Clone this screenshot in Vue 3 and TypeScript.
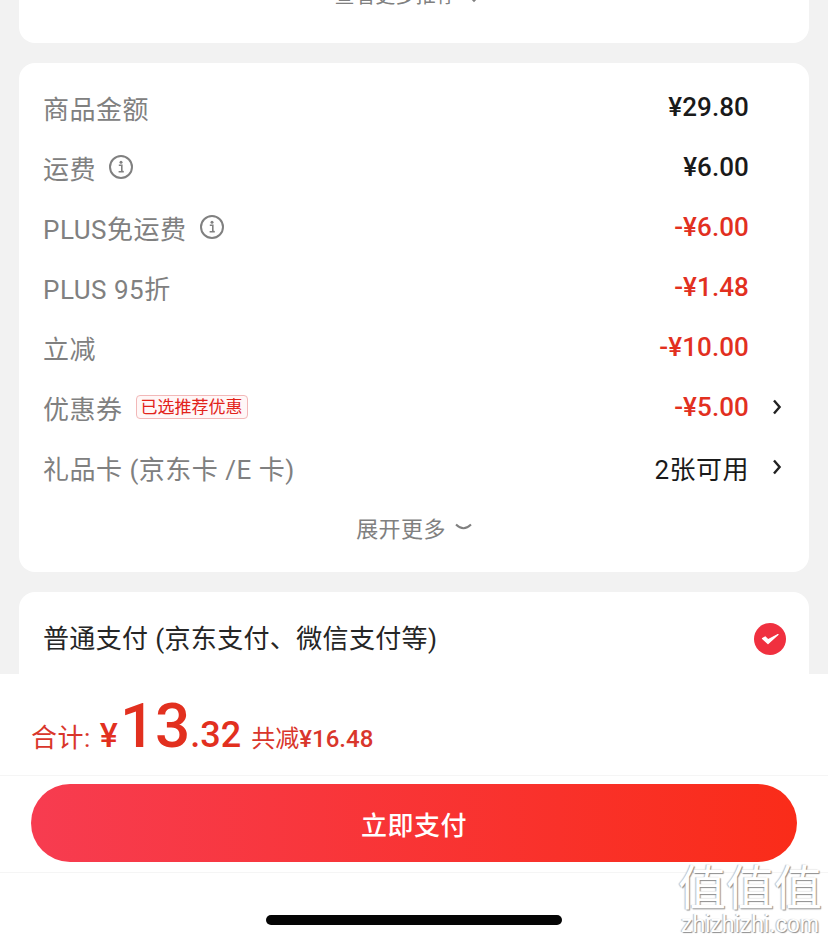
<script setup lang="ts">
interface Row {
  label: string
  value: string
  info?: boolean
  red?: boolean
  tag?: string
  arrow?: boolean
  cjk?: boolean
}
const rows: Row[] = [
  { label: '商品金额', value: '¥29.80' },
  { label: '运费', value: '¥6.00', info: true },
  { label: 'PLUS免运费', value: '-¥6.00', info: true, red: true },
  { label: 'PLUS 95折', value: '-¥1.48', red: true },
  { label: '立减', value: '-¥10.00', red: true },
  { label: '优惠券', value: '-¥5.00', red: true, tag: '已选推荐优惠', arrow: true },
  { label: '礼品卡 (京东卡 /E 卡)', value: '2张可用', arrow: true, cjk: true }
]
</script>

<template>
  <div class="page">
    <section class="card top-card">
      <span class="more">查看更多推荐</span>
      <svg class="more-arrow" width="12" height="8" viewBox="0 0 12 8"><path d="M2 1l4 4 4-4" fill="none" stroke="#808080" stroke-width="1.6" /></svg>
    </section>

    <section class="card fees">
      <div v-for="row in rows" :key="row.label" class="row">
        <div class="left">
          <span class="label">{{ row.label }}</span>
          <svg v-if="row.info" class="info" width="26" height="26" viewBox="0 0 26 26">
            <circle cx="13" cy="13" r="11" fill="none" stroke="#808080" stroke-width="2" />
            <circle cx="13" cy="8.2" r="1.5" fill="#808080" />
            <path d="M10.8 11.2h3v6.4h1.6M10.6 17.8h5.2" fill="none" stroke="#808080" stroke-width="1.6" />
          </svg>
          <span v-if="row.tag" class="tag">{{ row.tag }}</span>
        </div>
        <div class="right">
          <span class="value" :class="{ red: row.red, cjk: row.cjk }">{{ row.value }}</span>
          <svg v-if="row.arrow" class="chevron" width="10" height="18" viewBox="0 0 10 18"><path d="M2 2.5L7.6 9 2 15.5" fill="none" stroke="#222" stroke-width="2.4" /></svg>
        </div>
      </div>
      <div class="expand">
        <span>展开更多</span>
        <svg width="17" height="8" viewBox="0 0 17 8"><path d="M1 1.5Q8.500 9 16 1.500" fill="none" stroke="#808080" stroke-width="2" /></svg>
      </div>
    </section>

    <section class="card pay">
      <span class="pay-label">普通支付 (京东支付、微信支付等)</span>
      <svg width="32" height="32" viewBox="0 0 32 32">
        <circle cx="16" cy="16" r="16" fill="#f0303f" />
        <path d="M8.500 15.500l5.500 5L24 11.500l-10 5.200-2.800-2.800z" fill="#fff" stroke="#fff" stroke-width="1.200" stroke-linejoin="round" />
      </svg>
    </section>

    <footer class="footer">
      <div class="total">
        <span class="total-label">合计:</span>
        <span class="yen">¥</span>
        <span class="int">13</span>
        <span class="dec">.32</span>
        <span class="saved"><span class="saved-cn">共减</span>¥16.48</span>
      </div>
      <div class="action">
        <button class="pay-btn" type="button">立即支付</button>
      </div>
      <div class="home"><span class="bar"></span></div>
    </footer>

    <div class="watermark">
      <span class="wm-cn">值值值</span>
      <span class="wm-en">zhizhizhi.com</span>
    </div>
  </div>
</template>

<style>
html, body { margin: 0; background: #f2f2f2; }
</style>

<style scoped>
.page {
  position: relative;
  width: 828px;
  height: 941px;
  overflow: hidden;
  background: #f2f2f2;
  font-family: Roboto, "Noto Sans CJK SC", sans-serif;
  box-sizing: border-box;
  padding: 0 19px 0 19px;
  display: flex;
  flex-direction: column;
  gap: 20px;
}
.card {
  background: #fff;
  border-radius: 16px;
  flex: none;
}
.top-card {
  height: 43px;
  border-radius: 0 0 16px 16px;
  display: flex;
  justify-content: center;
  align-items: flex-start;
  gap: 12px;
  overflow: hidden;
}
.more {
  font-size: 20px;
  line-height: 28px;
  margin-top: -18px;
  color: #808080;
  letter-spacing: 0.3px;
  margin-left: -13px;
}
.more-arrow { margin-top: -4px; }
.fees {
  height: 509px;
  box-sizing: border-box;
  padding: 14px 0 15px;
}
.row {
  height: 60px;
  display: flex;
  align-items: center;
  justify-content: space-between;
  padding-left: 24px;
}
.left {
  display: flex;
  align-items: center;
}
.label {
  font-size: 26px;
  color: #808080;
  letter-spacing: 0.5px;
}
.info { margin-left: 12px; }
.tag {
  margin-left: 13px;
  height: 24px;
  box-sizing: border-box;
  width: 112px;
  border: 1px solid #f2b8b8;
  border-radius: 4px;
  background: #fff7f7;
  color: #e2231a;
  font-size: 17px;
  line-height: 22px;
  text-align: center;
  white-space: nowrap;
}
.right {
  width: 250px;
  display: flex;
  align-items: center;
  justify-content: flex-end;
  position: relative;
  padding-right: 60px;
}
.value {
  font-size: 26px;
  font-weight: 500;
  color: #1a1a1a;
  letter-spacing: 0.1px;
}
.value.red { color: #e2301f; }
.value.cjk {
  font-weight: 400;
  letter-spacing: 0.5px;
}
.chevron {
  position: absolute;
  right: 27px;
  top: 50%;
  margin-top: -9px;
}
.expand {
  height: 60px;
  display: flex;
  align-items: center;
  justify-content: center;
  gap: 9px;
  font-size: 22px;
  color: #808080;
  letter-spacing: 0.4px;
}
.pay {
  height: 120px;
  box-sizing: border-box;
  padding: 31px 23px 0 24px;
  display: flex;
  align-items: flex-start;
  justify-content: space-between;
  border-radius: 16px 16px 0 0;
}
.pay-label {
  font-size: 26px;
  line-height: 32px;
  color: #262626;
  letter-spacing: 0.35px;
}
.footer {
  position: absolute;
  left: 0;
  right: 0;
  bottom: 0;
  height: 267px;
  background: #fff;
  display: flex;
  flex-direction: column;
}
.total {
  height: 102px;
  box-sizing: border-box;
  border-bottom: 1px solid #f5f5f5;
  padding-left: 31px;
  display: flex;
  align-items: baseline;
  color: #e2301f;
  padding-top: 20px;
  font-weight: 500;
}
.total-label {
  font-size: 26px;
  font-weight: 400;
  color: #d9362b;
  letter-spacing: 0.5px;
  margin-right: 9px;
}
.yen { font-size: 34px; margin-right: 2px; }
.int { font-size: 62px; line-height: 64px; }
.dec { font-size: 36px; }
.saved {
  font-size: 24px;
  margin-left: 10px;
  color: #d9362b;
}
.saved-cn { font-weight: 400; }
.action {
  height: 97px;
  box-sizing: border-box;
  padding: 8px 31px 0;
  border-bottom: 1px solid #f5f5f5;
}
.pay-btn {
  display: block;
  width: 100%;
  height: 78px;
  border: 0;
  border-radius: 39px;
  background: linear-gradient(90deg, #f73c50, #fa2c19);
  color: #fff;
  font-family: inherit;
  font-size: 26px;
  font-weight: 500;
  letter-spacing: 0.5px;
}
.home {
  flex: 1;
  display: flex;
  justify-content: center;
  padding-top: 42px;
}
.bar {
  width: 296px;
  height: 10px;
  border-radius: 5px;
  background: #050505;
}
.watermark {
  position: absolute;
  left: 678px;
  top: 856px;
  width: 144px;
  display: flex;
  flex-direction: column;
  align-items: center;
  color: #fff;
  text-shadow: 1px 1px 1px #8c8c8c, -1px 0 1px #bdbdbd;
}
.wm-cn {
  font-size: 48px;
  line-height: 56px;
  font-family: "Noto Sans CJK SC", sans-serif;
  white-space: nowrap;
}
.wm-en {
  font-family: "Liberation Sans", sans-serif;
  font-size: 23px;
  line-height: 26px;
  margin-top: -1px;
  white-space: nowrap;
}
</style>
